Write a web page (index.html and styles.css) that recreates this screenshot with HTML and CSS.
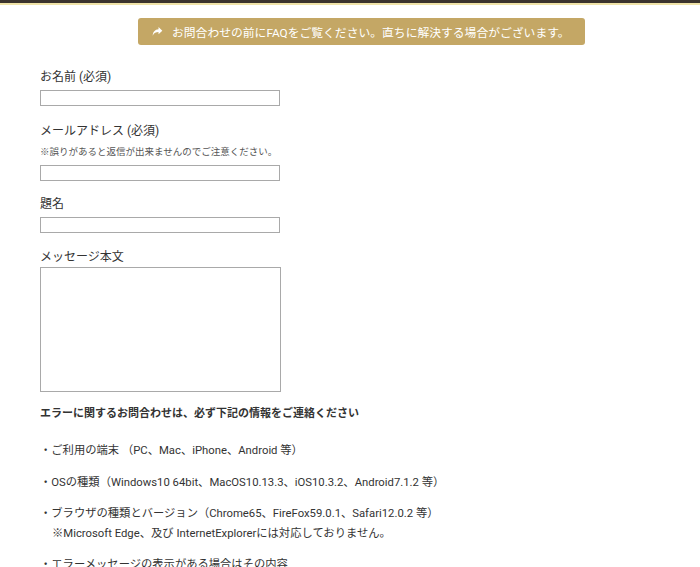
FILE: index.html
```html
<!DOCTYPE html>
<html lang="ja">
<head>
    <meta charset="UTF-8">
    <meta name="viewport" content="width=device-width, initial-scale=1.0">
    <title>お問合わせ</title>
    <link rel="stylesheet" href="styles.css">
</head>
<body>
    <div class="top-bar"></div>
    <div class="page">
        <div class="faq-note">
            <svg class="faq-icon" viewBox="0 0 16 16" width="11" height="11"><path d="M9.5 1.5 L15 6.8 L9.5 12 V8.8 C5.8 8.8 3 9.8 1 14 C1.4 8.6 4.2 5.2 9.5 4.8 Z" fill="#fff"/></svg>
            <span>お問合わせの前にFAQをご覧ください。直ちに解決する場合がございます。</span>
        </div>

        <form class="contact-form">
            <label class="field-label name">お名前 (必須)</label>
            <input type="text" class="field-input">

            <label class="field-label mail">メールアドレス (必須)</label>
            <p class="field-note">※誤りがあると返信が出来ませんのでご注意ください。</p>
            <input type="text" class="field-input after-note">

            <label class="field-label subject">題名</label>
            <input type="text" class="field-input">

            <label class="field-label message">メッセージ本文</label>
            <textarea class="field-text"></textarea>
        </form>

        <p class="error-title">エラーに関するお問合わせは、必ず下記の情報をご連絡ください</p>
        <ul class="error-list">
            <li>・ご利用の端末 （PC、Mac、iPhone、Android 等）</li>
            <li>・OSの種類（Windows10 64bit、MacOS10.13.3、iOS10.3.2、Android7.1.2 等）</li>
            <li class="tight">・ブラウザの種類とバージョン（Chrome65、FireFox59.0.1、Safari12.0.2 等）<br><span class="sub">※Microsoft Edge、及び InternetExplorerには対応しておりません。</span></li>
            <li>・エラーメッセージの表示がある場合はその内容</li>
        </ul>
    </div>
</body>
</html>
```

FILE: styles.css
```css
body {
    margin: 0;
    font-family: Roboto, "Noto Sans CJK JP", sans-serif;
    color: #333;
    background: #fff;
}
.top-bar {
    height: 3px;
    background: #3b332d;
    border-bottom: 2px solid #efe3a8;
}
.page {
    padding: 0 40px;
}
.faq-note {
    display: flex;
    align-items: center;
    width: 447px;
    height: 27px;
    box-sizing: border-box;
    margin: 13px 0 0 98px;
    padding-left: 14px;
    background: #c4a765;
    border-radius: 3px;
    color: #fff;
    font-size: 11.8px;
}
.faq-icon {
    margin-right: 9px;
}
.contact-form {
    display: flex;
    flex-direction: column;
    align-items: flex-start;
}
.field-label {
    display: block;
    font-size: 12px;
    line-height: 16px;
    margin-top: 14px;
}
.field-label.name {
    margin-top: 24px;
}
.field-label.mail {
    margin-top: 17px;
}
.field-label.subject {
    margin-top: 15px;
}
.field-label.message {
    margin-top: 16px;
}
.field-note {
    margin: 6px 0 0;
    font-size: 9.5px;
    line-height: 14px;
    color: #555;
}
.field-input {
    width: 240px;
    height: 16px;
    box-sizing: border-box;
    margin: 5px 0 0;
    padding: 0;
    border: 1px solid #a9a9a9;
}
.field-input.after-note {
    margin-top: 6px;
}
.field-text {
    width: 241px;
    height: 125px;
    box-sizing: border-box;
    margin: 2px 0 0;
    border: 1px solid #a9a9a9;
    resize: none;
}
.error-title {
    margin: 14px 0 0;
    font-size: 11px;
    line-height: 16px;
    font-weight: bold;
}
.error-list {
    list-style: none;
    margin: 19px 0 0;
    padding: 0;
    font-size: 11.3px;
    line-height: 20px;
}
.error-list li {
    margin-bottom: 12px;
}
.error-list li.tight {
    margin-bottom: 11px;
}
.error-list li:nth-child(2) {
    margin-bottom: 11px;
}
.error-list .sub {
    padding-left: 12px;
}
```
